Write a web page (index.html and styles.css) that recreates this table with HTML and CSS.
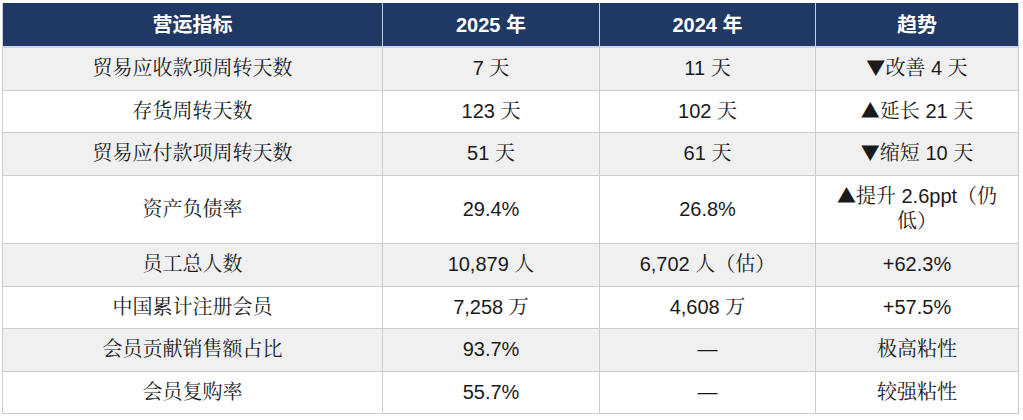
FILE: index.html
```html
<!DOCTYPE html>
<html lang="zh-CN">
<head>
<meta charset="utf-8">
<title>营运指标</title>
<link rel="stylesheet" href="styles.css">
</head>
<body>
<div class="wrap">
<table class="ops">
  <colgroup>
    <col class="c1"><col class="c2"><col class="c3"><col class="c4">
  </colgroup>
  <thead>
    <tr><th>营运指标</th><th>2025 年</th><th>2024 年</th><th>趋势</th></tr>
  </thead>
  <tbody>
    <tr><td class="name">贸易应收款项周转天数</td><td>7 天</td><td>11 天</td><td><span class="tri">▼</span>改善 4 天</td></tr>
    <tr><td class="name">存货周转天数</td><td>123 天</td><td>102 天</td><td><span class="tri">▲</span>延长 21 天</td></tr>
    <tr><td class="name">贸易应付款项周转天数</td><td>51 天</td><td>61 天</td><td><span class="tri">▼</span>缩短 10 天</td></tr>
    <tr><td class="name">资产负债率</td><td>29.4%</td><td>26.8%</td><td><span class="tri">▲</span>提升 2.6ppt（仍低）</td></tr>
    <tr><td class="name">员工总人数</td><td>10,879 人</td><td>6,702 人（估）</td><td>+62.3%</td></tr>
    <tr><td class="name">中国累计注册会员</td><td>7,258 万</td><td>4,608 万</td><td>+57.5%</td></tr>
    <tr><td class="name">会员贡献销售额占比</td><td>93.7%</td><td>—</td><td>极高粘性</td></tr>
    <tr><td class="name">会员复购率</td><td>55.7%</td><td>—</td><td>较强粘性</td></tr>
  </tbody>
</table>
</div>
</body>
</html>
```
FILE: styles.css
```css
html, body {
  margin: 0;
  padding: 0;
  background: #ffffff;
}
.wrap {
  padding: 3px 0 0 2px;
}
.ops {
  width: 1016px;
  table-layout: fixed;
  border-collapse: collapse;
  font-family: "Liberation Sans", "Noto Serif CJK SC", "Noto Sans CJK SC", sans-serif;
  font-size: 20px;
  color: #1a1a1a;
}
.c1 { width: 380px; }
.c2 { width: 217px; }
.c3 { width: 216px; }
.c4 { width: 203px; }
.ops th {
  background: #203864;
  color: #ffffff;
  font-family: "Liberation Sans", "Noto Sans CJK SC", sans-serif;
  font-weight: bold;
  height: 44px;
  padding: 0 8px;
  line-height: 26px;
  border-left: 1px solid #c5ccd8;
  border-right: 1px solid #c5ccd8;
  border-bottom: 2px solid #c9d6ea;
  text-align: center;
  box-sizing: border-box;
}
.ops td {
  text-align: center;
  line-height: 25.6px;
  padding: 8px 18px;
  border: 1px solid #cccccc;
  height: 42.6px;
  box-sizing: border-box;
}
.ops .tri {
  font-family: "Noto Sans CJK SC", sans-serif;
  font-size: 19px;
  line-height: 1;
}
.ops tbody tr:nth-child(odd) td {
  background: #f0f0f0;
}
.ops tbody tr:nth-child(even) td {
  background: #ffffff;
}
```
